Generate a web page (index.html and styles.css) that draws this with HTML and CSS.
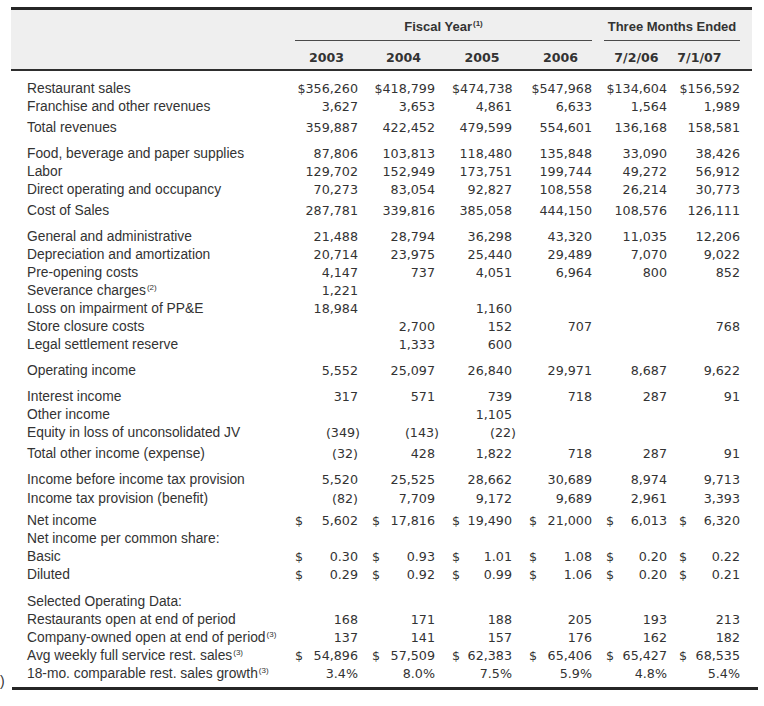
FILE: index.html
```html
<!DOCTYPE html>
<html>
<head>
<meta charset="utf-8">
<link rel="stylesheet" href="styles.css">
</head>
<body>
<div class="page">
<table class="fin">
<colgroup>
<col class="w-lab"><col class="w-c1"><col class="w-c2"><col class="w-c3"><col class="w-c4"><col class="w-c5"><col class="w-c6">
</colgroup>
<thead>
<tr class="h1">
<th class="blank"></th>
<th colspan="4" class="grp"><div class="grp-in fy">Fiscal Year<sup>(1)</sup></div></th>
<th colspan="2" class="grp"><div class="grp-in tm">Three Months Ended</div></th>
</tr>
<tr class="h2">
<th class="blank"></th>
<th class="c1">2003</th><th class="c2">2004</th><th class="c3">2005</th><th class="c4">2006</th><th class="c5">7/2/06</th><th class="c6 last-h">7/1/07</th>
</tr>
</thead>
<tbody>
<tr class="gf"><td class="lab">Restaurant sales</td><td class="c1">$356,260</td><td class="c2">$418,799</td><td class="c3">$474,738</td><td class="c4">$547,968</td><td class="c5">$134,604</td><td class="c6">$156,592</td></tr>
<tr><td class="lab">Franchise and other revenues</td><td class="c1">3,627</td><td class="c2">3,653</td><td class="c3">4,861</td><td class="c4">6,633</td><td class="c5">1,564</td><td class="c6">1,989</td></tr>
<tr class="gs"><td class="lab">Total revenues</td><td class="c1">359,887</td><td class="c2">422,452</td><td class="c3">479,599</td><td class="c4">554,601</td><td class="c5">136,168</td><td class="c6">158,581</td></tr>

<tr class="gl"><td class="lab">Food, beverage and paper supplies</td><td class="c1">87,806</td><td class="c2">103,813</td><td class="c3">118,480</td><td class="c4">135,848</td><td class="c5">33,090</td><td class="c6">38,426</td></tr>
<tr><td class="lab">Labor</td><td class="c1">129,702</td><td class="c2">152,949</td><td class="c3">173,751</td><td class="c4">199,744</td><td class="c5">49,272</td><td class="c6">56,912</td></tr>
<tr><td class="lab">Direct operating and occupancy</td><td class="c1">70,273</td><td class="c2">83,054</td><td class="c3">92,827</td><td class="c4">108,558</td><td class="c5">26,214</td><td class="c6">30,773</td></tr>
<tr class="gs"><td class="lab">Cost of Sales</td><td class="c1">287,781</td><td class="c2">339,816</td><td class="c3">385,058</td><td class="c4">444,150</td><td class="c5">108,576</td><td class="c6">126,111</td></tr>

<tr class="gl"><td class="lab">General and administrative</td><td class="c1">21,488</td><td class="c2">28,794</td><td class="c3">36,298</td><td class="c4">43,320</td><td class="c5">11,035</td><td class="c6">12,206</td></tr>
<tr><td class="lab">Depreciation and amortization</td><td class="c1">20,714</td><td class="c2">23,975</td><td class="c3">25,440</td><td class="c4">29,489</td><td class="c5">7,070</td><td class="c6">9,022</td></tr>
<tr><td class="lab">Pre-opening costs</td><td class="c1">4,147</td><td class="c2">737</td><td class="c3">4,051</td><td class="c4">6,964</td><td class="c5">800</td><td class="c6">852</td></tr>
<tr><td class="lab">Severance charges<sup>(2)</sup></td><td class="c1">1,221</td><td class="c2"></td><td class="c3"></td><td class="c4"></td><td class="c5"></td><td class="c6"></td></tr>
<tr><td class="lab">Loss on impairment of PP&amp;E</td><td class="c1">18,984</td><td class="c2"></td><td class="c3">1,160</td><td class="c4"></td><td class="c5"></td><td class="c6"></td></tr>
<tr><td class="lab">Store closure costs</td><td class="c1"></td><td class="c2">2,700</td><td class="c3">152</td><td class="c4">707</td><td class="c5"></td><td class="c6">768</td></tr>
<tr><td class="lab">Legal settlement reserve</td><td class="c1"></td><td class="c2">1,333</td><td class="c3">600</td><td class="c4"></td><td class="c5"></td><td class="c6"></td></tr>

<tr class="gl"><td class="lab">Operating income</td><td class="c1">5,552</td><td class="c2">25,097</td><td class="c3">26,840</td><td class="c4">29,971</td><td class="c5">8,687</td><td class="c6">9,622</td></tr>

<tr class="gl"><td class="lab">Interest income</td><td class="c1">317</td><td class="c2">571</td><td class="c3">739</td><td class="c4">718</td><td class="c5">287</td><td class="c6">91</td></tr>
<tr><td class="lab">Other income</td><td class="c1"></td><td class="c2"></td><td class="c3">1,105</td><td class="c4"></td><td class="c5"></td><td class="c6"></td></tr>
<tr><td class="lab">Equity in loss of unconsolidated JV</td><td class="c1">(349<span class="rp-s">)</span></td><td class="c2">(143<span class="rp">)</span></td><td class="c3">(22<span class="rp">)</span></td><td class="c4"></td><td class="c5"></td><td class="c6"></td></tr>
<tr class="gs"><td class="lab">Total other income (expense)</td><td class="c1">(32)</td><td class="c2">428</td><td class="c3">1,822</td><td class="c4">718</td><td class="c5">287</td><td class="c6">91</td></tr>

<tr class="gl"><td class="lab">Income before income tax provision</td><td class="c1">5,520</td><td class="c2">25,525</td><td class="c3">28,662</td><td class="c4">30,689</td><td class="c5">8,974</td><td class="c6">9,713</td></tr>
<tr class="g1"><td class="lab">Income tax provision (benefit)</td><td class="c1">(82)</td><td class="c2">7,709</td><td class="c3">9,172</td><td class="c4">9,689</td><td class="c5">2,961</td><td class="c6">3,393</td></tr>
<tr class="gm"><td class="lab">Net income</td><td class="c1"><div class="dl"><span>$</span><span>5,602</span></div></td><td class="c2"><div class="dl"><span>$</span><span>17,816</span></div></td><td class="c3"><div class="dl"><span>$</span><span>19,490</span></div></td><td class="c4"><div class="dl"><span>$</span><span>21,000</span></div></td><td class="c5"><div class="dl"><span>$</span><span>6,013</span></div></td><td class="c6"><div class="dl"><span>$</span><span>6,320</span></div></td></tr>
<tr><td class="lab">Net income per common share:</td><td class="c1"></td><td class="c2"></td><td class="c3"></td><td class="c4"></td><td class="c5"></td><td class="c6"></td></tr>
<tr><td class="lab">Basic</td><td class="c1"><div class="dl"><span>$</span><span>0.30</span></div></td><td class="c2"><div class="dl"><span>$</span><span>0.93</span></div></td><td class="c3"><div class="dl"><span>$</span><span>1.01</span></div></td><td class="c4"><div class="dl"><span>$</span><span>1.08</span></div></td><td class="c5"><div class="dl"><span>$</span><span>0.20</span></div></td><td class="c6"><div class="dl"><span>$</span><span>0.22</span></div></td></tr>
<tr><td class="lab">Diluted</td><td class="c1"><div class="dl"><span>$</span><span>0.29</span></div></td><td class="c2"><div class="dl"><span>$</span><span>0.92</span></div></td><td class="c3"><div class="dl"><span>$</span><span>0.99</span></div></td><td class="c4"><div class="dl"><span>$</span><span>1.06</span></div></td><td class="c5"><div class="dl"><span>$</span><span>0.20</span></div></td><td class="c6"><div class="dl"><span>$</span><span>0.21</span></div></td></tr>

<tr class="gxl"><td class="lab">Selected Operating Data:</td><td class="c1"></td><td class="c2"></td><td class="c3"></td><td class="c4"></td><td class="c5"></td><td class="c6"></td></tr>
<tr><td class="lab">Restaurants open at end of period</td><td class="c1">168</td><td class="c2">171</td><td class="c3">188</td><td class="c4">205</td><td class="c5">193</td><td class="c6">213</td></tr>
<tr><td class="lab">Company-owned open at end of period<sup>(3)</sup></td><td class="c1">137</td><td class="c2">141</td><td class="c3">157</td><td class="c4">176</td><td class="c5">162</td><td class="c6">182</td></tr>
<tr><td class="lab">Avg weekly full service rest. sales<sup>(3)</sup></td><td class="c1"><div class="dl"><span>$</span><span>54,896</span></div></td><td class="c2"><div class="dl"><span>$</span><span>57,509</span></div></td><td class="c3"><div class="dl"><span>$</span><span>62,383</span></div></td><td class="c4"><div class="dl"><span>$</span><span>65,406</span></div></td><td class="c5"><div class="dl"><span>$</span><span>65,427</span></div></td><td class="c6"><div class="dl"><span>$</span><span>68,535</span></div></td></tr>
<tr><td class="lab">18-mo. comparable rest. sales growth<sup>(3)</sup></td><td class="c1">3.4%</td><td class="c2">8.0%</td><td class="c3">7.5%</td><td class="c4">5.9%</td><td class="c5">4.8%</td><td class="c6">5.4%</td></tr>
</tbody>
</table>
<div class="foot"><span class="paren">)</span><div class="bottom-rule"></div></div>
</div>
</body>
</html>
```

FILE: styles.css
```css
html, body {
  margin: 0;
  padding: 0;
  background: #ffffff;
}
.page {
  width: 764px;
  padding-top: 7px;
  color: #333333;
}
.fin {
  margin-left: 11px;
  width: 741px;
  table-layout: fixed;
  border-collapse: collapse;
  border-spacing: 0;
}
.w-lab { width: 284px; }
.w-c1 { width: 63px; }
.w-c2 { width: 77px; }
.w-c3 { width: 77px; }
.w-c4 { width: 80px; }
.w-c5 { width: 75px; }
.w-c6 { width: 85px; }

.fin thead th {
  background: #efefef;
  font-weight: bold;
  color: #333;
  padding: 0;
}
.fin thead tr.h1 th {
  border-top: 3px solid #262626;
}
.fin thead tr.h2 th {
  border-bottom: 2px solid #2e2e2e;
  padding-top: 9px;
  padding-bottom: 3px;
  line-height: 16px;
  font-family: "DejaVu Sans", sans-serif;
  font-size: 12.6px;
  text-align: center;
}
.grp-in {
  font-family: "Liberation Sans", Arial, sans-serif;
  font-size: 13px;
  line-height: 16px;
  margin-top: 9px;
  padding-bottom: 5px;
  border-bottom: 1px solid #4a4a4a;
  text-align: center;
}
.grp-in.tm {
  margin-left: 12px;
  margin-right: 12px;
}
.grp-in sup, .lab sup {
  font-size: 8px;
  line-height: 0;
  vertical-align: baseline;
  position: relative;
  top: -5px;
  margin-left: 1px;
}

.fin td {
  padding: 0;
  line-height: 18px;
  height: 18px;
  white-space: nowrap;
  vertical-align: top;
}
.fin td.lab {
  padding-left: 16px;
  font-family: "Liberation Sans", Arial, sans-serif;
  font-size: 13.8px;
}
.c1, .c2, .c3, .c4, .c5, .c6 {
  font-family: "DejaVu Sans", sans-serif;
  font-size: 12.7px;
  text-align: right;
}
.fin .c1 { padding-left: 0; }
.fin .c2 { padding-left: 14px; }
.fin .c3 { padding-left: 17px; }
.fin .c4 { padding-left: 17px; }
.fin .c5 { padding-left: 14px; }
.fin .c6 { padding-left: 12px; padding-right: 12px; }
.fin thead .last-h { padding-right: 22px; padding-left: 2px; }

.fin tr.gf td { padding-top: 9px; }
.fin tr.g1 td { padding-top: 1px; }
.fin tr.gs td { padding-top: 3px; }
.fin tr.gm td { padding-top: 4px; }
.fin tr.gl td { padding-top: 8px; }
.fin tr.gxl td { padding-top: 9px; }

.rp {
  margin-right: -4px;
}
.rp-s {
  margin-right: -2px;
}
.dl {
  display: flex;
  justify-content: space-between;
}

.foot {
  display: flex;
  align-items: flex-end;
  margin-top: -10px;
}
.paren {
  width: 12px;
  font-family: "Liberation Sans", Arial, sans-serif;
  font-size: 14px;
  line-height: 17px;
  color: #333;
}
.bottom-rule {
  width: 746px;
  border-top: 3px solid #262626;
}
```
